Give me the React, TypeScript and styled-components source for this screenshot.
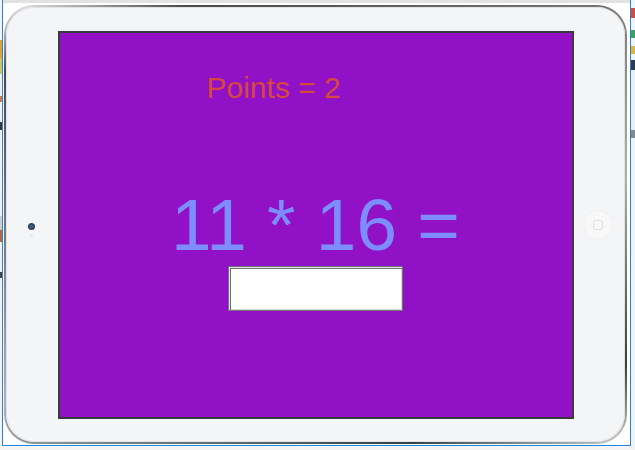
import { createGlobalStyle, styled } from "styled-components";

const GlobalStyle = createGlobalStyle`
  html, body {
    margin: 0;
    padding: 0;
    background: #ffffff;
    font-family: "Liberation Sans", Arial, sans-serif;
    overflow: hidden;
  }
`;

type Chunk = { h: number; c: string };

const leftBits: Chunk[] = [
  { h: 40, c: "#f3f3f3" },
  { h: 18, c: "#d9a63c" },
  { h: 16, c: "#c9c673" },
  { h: 22, c: "#eeeeee" },
  { h: 6, c: "#c27a5a" },
  { h: 20, c: "#f2f2f2" },
  { h: 8, c: "#3a3a3a" },
  { h: 86, c: "#f1f1f1" },
  { h: 14, c: "#cdcdcd" },
  { h: 12, c: "#b06a52" },
  { h: 30, c: "#efefef" },
  { h: 6, c: "#444" },
  { h: 172, c: "#f3f3f3" },
];

const rightBits: Chunk[] = [
  { h: 8, c: "#f3f3f3" },
  { h: 10, c: "#d84a3a" },
  { h: 12, c: "#f3f3f3" },
  { h: 8, c: "#3aa55a" },
  { h: 8, c: "#f3f3f3" },
  { h: 8, c: "#e4b43a" },
  { h: 6, c: "#f3f3f3" },
  { h: 10, c: "#333a48" },
  { h: 60, c: "#eeeeee" },
  { h: 8, c: "#888" },
  { h: 312, c: "#f2f2f2" },
];

const App = (): JSX.Element => {
  return (
    <Page>
      <GlobalStyle />
      <Strip $w={2}>
        {leftBits.map((b, i) => (
          <Bit key={i} $h={b.h} $c={b.c} />
        ))}
      </Strip>
      <Window>
        <Bezel>
          <Face>
            <SideArea>
              <CameraWrap>
                <Camera />
                <Sensor />
              </CameraWrap>
            </SideArea>
            <Screen>
              <Points>Points = 2</Points>
              <Question>11 * 16 =</Question>
              <AnswerRow>
                <Answer type="text" />
              </AnswerRow>
            </Screen>
            <SideArea>
              <HomeButton>
                <HomeSquare />
              </HomeButton>
            </SideArea>
          </Face>
        </Bezel>
      </Window>
      <Strip $w={4}>
        {rightBits.map((b, i) => (
          <Bit key={i} $h={b.h} $c={b.c} />
        ))}
      </Strip>
    </Page>
  );
};

export default App;

const Page = styled.div`
  width: 635px;
  height: 450px;
  display: flex;
  background: #f4f4f4;
`;

const Strip = styled.div<{ $w: number }>`
  width: ${(p) => p.$w}px;
  flex-shrink: 0;
  display: flex;
  flex-direction: column;
  overflow: hidden;
`;

const Bit = styled.div<{ $h: number; $c: string }>`
  height: ${(p) => p.$h}px;
  background: ${(p) => p.$c};
  flex-shrink: 0;
`;

const Window = styled.div`
  flex: 1;
  height: 446px;
  box-sizing: border-box;
  border-left: 1px solid #1e86e0;
  border-right: 1px solid #1e86e0;
  border-bottom: 1px solid #1e86e0;
  background: linear-gradient(#e2e2e2 0, #e2e2e2 3px, #ffffff 3px);
  padding: 5px 3px 1px 1px;
  display: flex;
`;

const Bezel = styled.div`
  flex: 1;
  height: 439px;
  box-sizing: border-box;
  padding: 2px;
  border-radius: 30px;
  background: linear-gradient(
    160deg,
    #f0f0f0 0%,
    #4a4a4a 10%,
    #7a7a7a 35%,
    #b0b0b0 60%,
    #3e3e3e 88%,
    #d0d0d0 100%
  );
`;

const Face = styled.div`
  height: 100%;
  border-radius: 28px;
  background: #f4f5f7;
  display: flex;
  align-items: center;
  box-shadow: inset 0 0 0 1px #e2e3e5;
`;

const SideArea = styled.div`
  flex: 1;
  display: flex;
  align-items: center;
  justify-content: center;
`;

const CameraWrap = styled.div`
  display: flex;
  flex-direction: column;
  align-items: center;
  gap: 4px;
  margin-top: 10px;
`;

const Camera = styled.div`
  width: 7px;
  height: 7px;
  border-radius: 50%;
  background: radial-gradient(circle, #2f5f9c 0, #2f5f9c 25%, #3a3d44 55%);
`;

const Sensor = styled.div`
  width: 3px;
  height: 3px;
  border-radius: 50%;
  background: #e4e5e8;
`;

const HomeButton = styled.div`
  width: 28px;
  height: 28px;
  border-radius: 50%;
  background: #f8f8f9;
  box-shadow: 0 0 2px rgba(0, 0, 0, 0.06), inset 0 0 1px rgba(0, 0, 0, 0.05);
  display: flex;
  align-items: center;
  justify-content: center;
  margin-left: -2px;
`;

const HomeSquare = styled.div`
  width: 8px;
  height: 8px;
  border: 1px solid #e0e0e2;
  border-radius: 3px;
`;

const Screen = styled.div`
  width: 516px;
  height: 388px;
  box-sizing: border-box;
  border: 2px solid #3a3a3c;
  background: #9111c6;
  display: flex;
  flex-direction: column;
`;

const Points = styled.div`
  margin: 40px 0 0 147px;
  font-size: 30px;
  line-height: 30px;
  color: #d6473e;
`;

const Question = styled.div`
  margin-top: 85px;
  text-align: center;
  font-size: 73px;
  line-height: 73px;
  color: #7d8cff;
`;

const AnswerRow = styled.div`
  display: flex;
  justify-content: center;
  margin-top: 5px;
`;

const Answer = styled.input`
  width: 175px;
  height: 45px;
  box-sizing: border-box;
  border: 1px solid #727272;
  background: #ffffff;
  box-shadow: inset 1px 1px 0 #e4e4e4, inset 2px 2px 0 #6e6e6e,
    inset -1px -1px 0 #dadada;
  outline: none;
  padding: 0 6px;
  font-size: 20px;
  font-family: "Liberation Sans", Arial, sans-serif;
`;
